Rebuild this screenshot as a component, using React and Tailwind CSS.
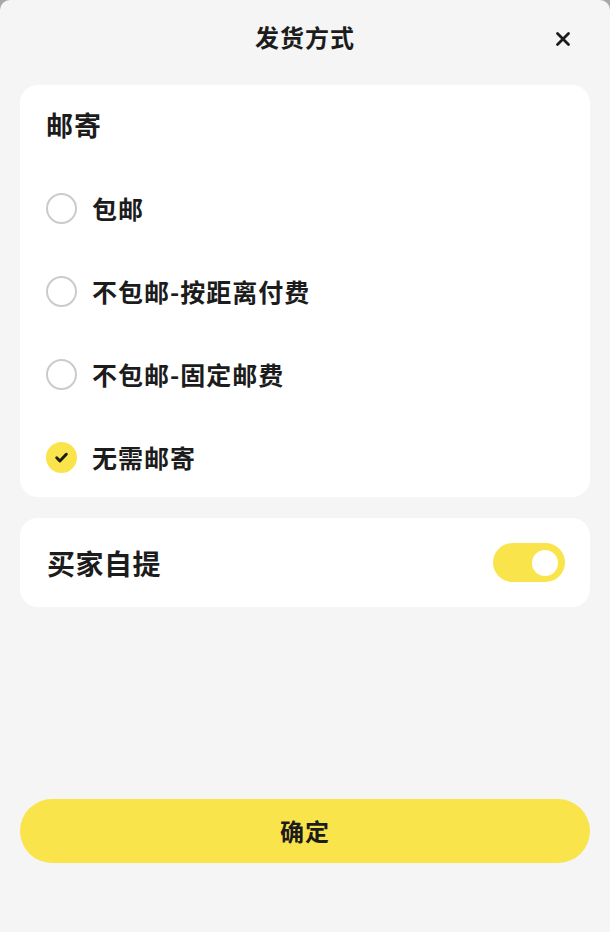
import { useState } from 'react';

const font = { fontFamily: '"Noto Sans CJK SC", "Noto Sans", sans-serif' };

const options = ['包邮', '不包邮-按距离付费', '不包邮-固定邮费', '无需邮寄'];

function Radio({ checked }) {
    if (checked) {
        return (
            <span className="flex h-[31px] w-[31px] items-center justify-center rounded-full bg-[#fae44c]">
                <svg width="17" height="17" viewBox="0 0 16 16" fill="none">
                    <path d="M3.5 8.3l3 3 6-6.4" stroke="#1c1c1c" strokeWidth="2.8" strokeLinecap="round" strokeLinejoin="round" />
                </svg>
            </span>
        );
    }
    return <span className="h-[31px] w-[31px] rounded-full border-[2.5px] border-[#cbcbcb] bg-white" />;
}

export default function App() {
    const [selected, setSelected] = useState(3);
    const [pickup, setPickup] = useState(true);

    return (
        <div className="h-[932px] w-[610px] bg-[#a8a8a8]" style={font}>
            <div className="flex h-full flex-col rounded-t-[10px] bg-[#f5f5f5] px-[20px] text-[#1c1c1c]">
                <header className="relative flex h-[85px] items-center justify-center pb-[11px]">
                    <h1 className="text-[24px] font-bold leading-none tracking-[1px]">发货方式</h1>
                    <button className="absolute right-[18px] top-[30px] flex h-[18px] w-[18px] items-center justify-center">
                        <svg width="16" height="16" viewBox="0 0 16 16" fill="none">
                            <path d="M2.5 2.5l11 11M13.5 2.5l-11 11" stroke="#1c1c1c" strokeWidth="2.8" strokeLinecap="round" />
                        </svg>
                    </button>
                </header>

                <section className="rounded-[18px] bg-white px-[26px] pb-[10px] pt-[19px]">
                    <h2 className="flex h-[40px] items-center text-[27px] font-bold leading-none tracking-[1px]">邮寄</h2>
                    <div className="mt-[34px] flex flex-col gap-[23px]">
                        {options.map((label, i) => (
                            <button key={label} onClick={() => setSelected(i)} className="flex h-[60px] items-center gap-[15px] text-left">
                                <Radio checked={selected === i} />
                                <span className="text-[25px] font-bold leading-none tracking-[1px]">{label}</span>
                            </button>
                        ))}
                    </div>
                </section>

                <section className="mt-[21px] flex h-[89px] items-center justify-between rounded-[18px] bg-white pl-[27px] pr-[25px]">
                    <h2 className="text-[28px] font-bold leading-none tracking-[0.5px]">买家自提</h2>
                    <button
                        onClick={() => setPickup(!pickup)}
                        className={`flex h-[39px] w-[72px] items-center rounded-full px-[7px] ${pickup ? 'justify-end bg-[#fae44c]' : 'justify-start bg-[#e2e2e2]'}`}
                    >
                        <span className="h-[26px] w-[26px] rounded-full bg-white" />
                    </button>
                </section>

                <button className="mt-[192px] flex h-[64px] w-full items-center justify-center rounded-full bg-[#fae44c] text-[24px] font-bold tracking-[1px]">
                    确定
                </button>
            </div>
        </div>
    );
}
